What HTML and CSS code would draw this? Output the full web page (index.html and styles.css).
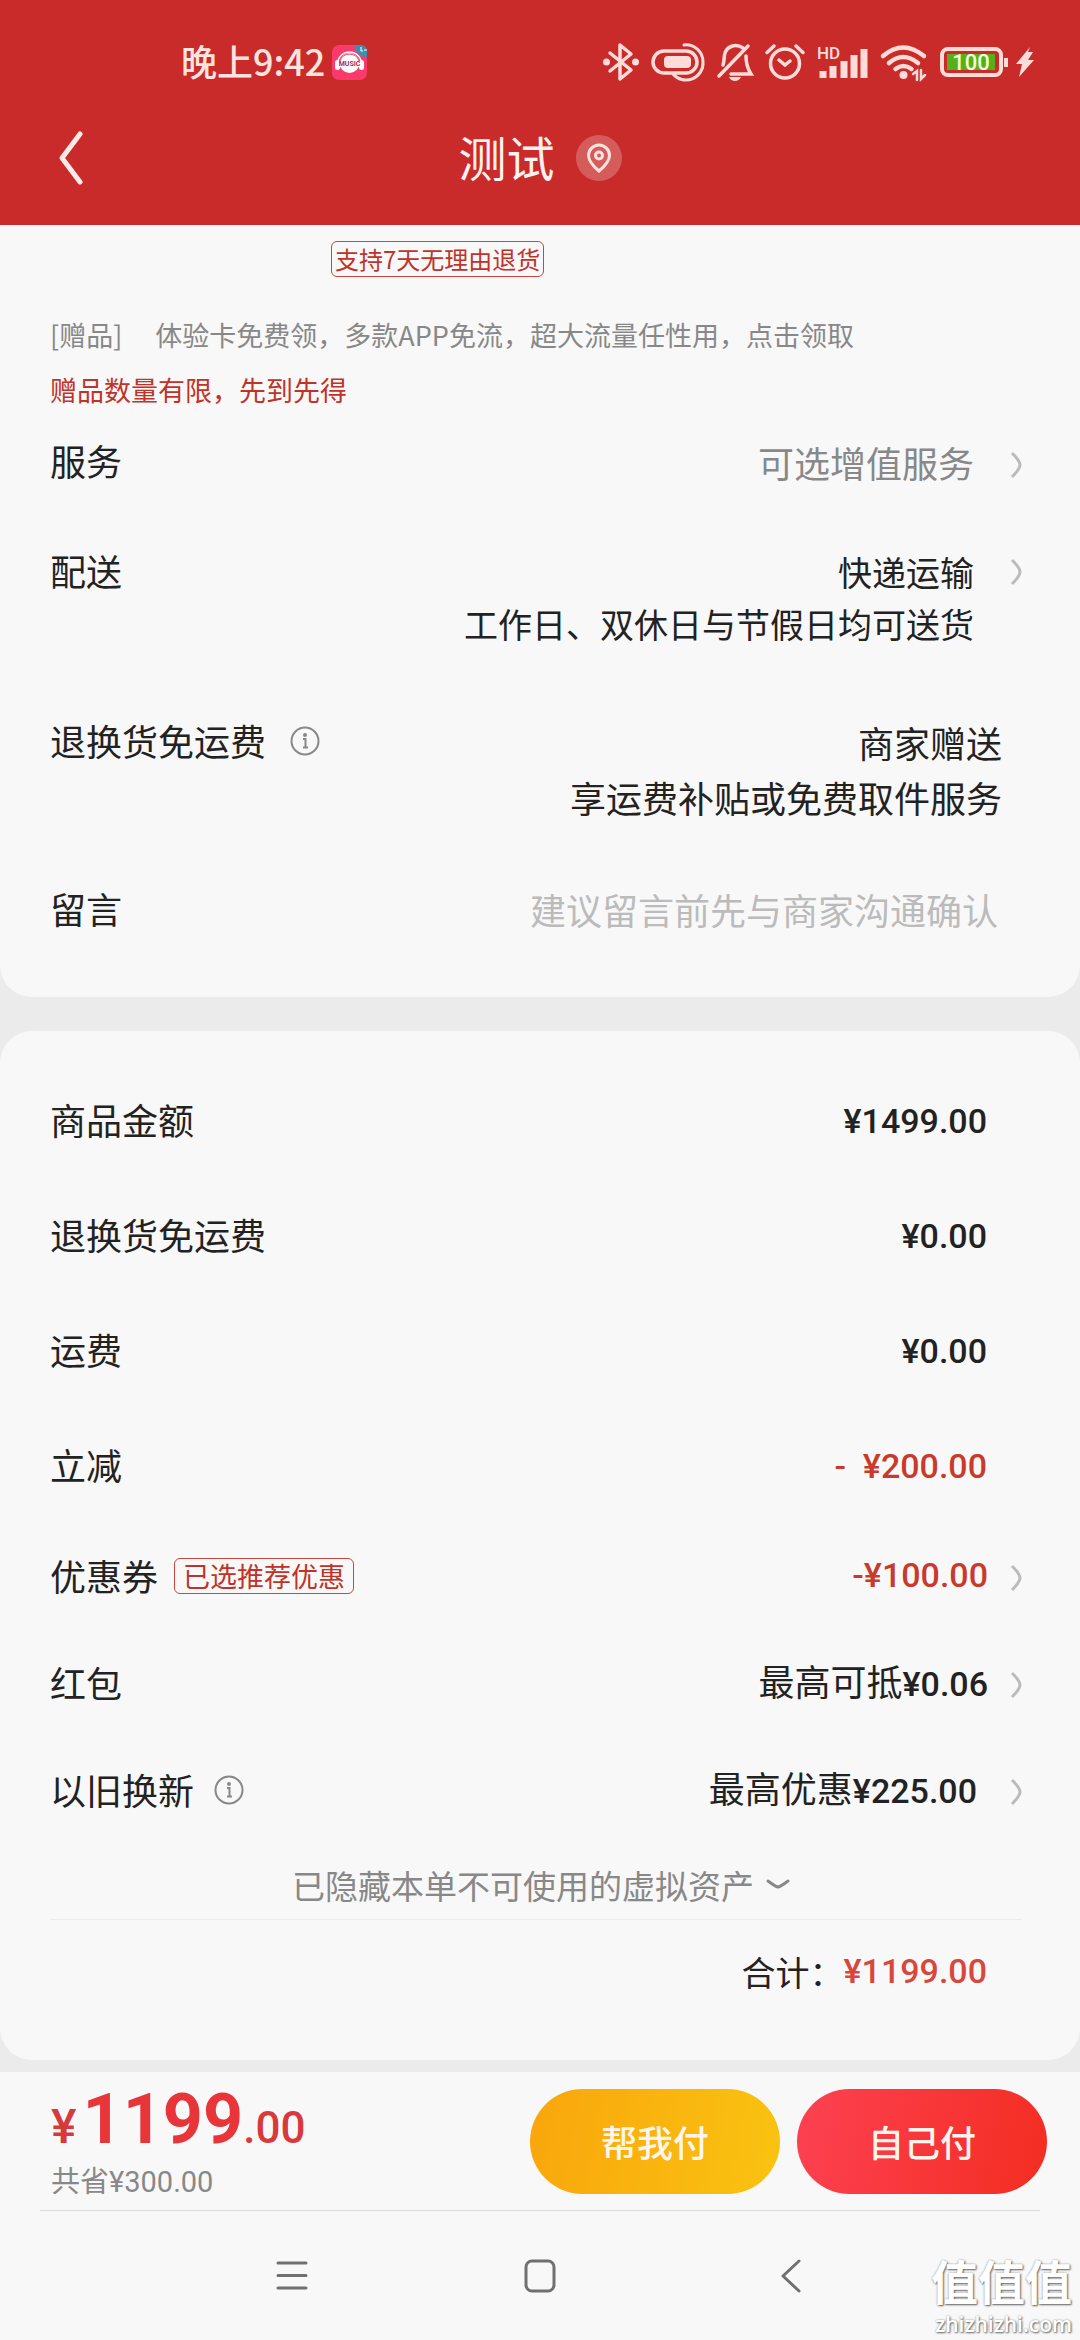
FILE: index.html
```html
<!DOCTYPE html>
<html lang="zh-CN">
<head>
<meta charset="utf-8">
<meta name="viewport" content="width=device-width, initial-scale=1">
<title>测试</title>
<link rel="stylesheet" href="styles.css">
</head>
<body>
<svg class="defs" aria-hidden="true">
  <symbol id="chevron" viewBox="0 0 12 28"><path d="M2 2q8 8 8 12t-8 12" /></symbol>
  <symbol id="info" viewBox="0 0 30 30"><circle cx="15" cy="15" r="13.5"/><path d="M13 13h2.500v8M13 21.500h5"/><circle class="dot" cx="15" cy="9" r="1"/></symbol>
</svg>

<header class="header">
  <div class="status">
    <div class="status-left">
      <span class="clock">晚上9:42</span>
      <svg class="app-icon" width="36" height="36" viewBox="0 0 36 36">
        <rect width="35" height="35" y="1" rx="7" fill="#fb3a6b"/>
        <path d="M22 1h6q7 0 7 7v5q-11 0-13-12z" fill="#3c8fb0"/>
        <path d="M29 3v4h2M32 6h3" fill="none" stroke="#fff" stroke-width="1"/>
        <circle cx="17.500" cy="19" r="10" fill="#fff"/>
        <path d="M5.500 20a12 12 0 0 1 24 0" fill="none" stroke="#fff" stroke-width="1.500"/>
        <path d="M8 17a10 10 0 0 1 19 0" fill="none" stroke="#fb3a6b" stroke-width="1"/>
        <rect x="3" y="16" width="5" height="10" rx="2.500" fill="#fff"/>
        <rect x="27" y="16" width="5" height="10" rx="2.500" fill="#fff"/>
        <text x="17.500" y="22" text-anchor="middle" class="app-text">MUSIC</text>
      </svg>
    </div>
    <div class="status-right">
      <svg width="36" height="38" viewBox="0 0 36 38"><path class="line" stroke-width="3.500" stroke-linejoin="round" d="M7 10l21 17-11 9V2l11 9L7 28"/><circle class="solid" cx="3.500" cy="19" r="3.500"/><circle class="solid" cx="32.500" cy="19" r="3.500"/></svg>
      <svg width="54" height="38" viewBox="0 0 54 38"><rect class="line" stroke-width="3.500" x="2" y="8" width="44" height="22" rx="11"/><rect class="solid" x="13" y="13" width="27" height="12" rx="4"/><path class="line" stroke-width="3" d="M33 2A17 17 0 0 1 52 19 17 17 0 0 1 22 31"/></svg>
      <svg width="36" height="38" viewBox="0 0 36 38"><path class="line" stroke-width="3.500" d="M2 33L31 3M6 22c1-3 1-6 1.500-10C9 3 19 0 26 5M29 13c0 8 1 12 5 18H14"/><path class="solid" d="M12 34h12q-2 4-6 4t-6-4z"/></svg>
      <svg width="40" height="38" viewBox="0 0 40 38"><circle class="line" stroke-width="3.500" cx="20" cy="20.500" r="14.500"/><path class="line" stroke-width="3.500" d="M2 9.500L9 3M38 9.500L31 3M14 17l6 5 5-4"/></svg>
      <svg width="51" height="38" viewBox="0 0 51 38"><text x="0" y="16" class="hd">HD</text><path class="bar" d="M6 35v-7M16 35V23M27 35V18M37 35V12M47 35V6"/></svg>
      <svg width="48" height="38" viewBox="0 0 48 38"><path class="line" stroke-width="4.500" d="M3 13q20-17 41 0M9 20q14-12 29 0M15.500 26q8-6 16 0"/><circle class="solid" cx="23.500" cy="32" r="4"/><path class="line" stroke-width="2.500" d="M33 31l4-3v9M45 32l-4 4v-9"/></svg>
      <svg width="68" height="38" viewBox="0 0 68 38"><rect class="line" stroke-width="4" x="2" y="6" width="59" height="26" rx="6"/><rect x="7" y="11" width="48" height="16" fill="#55b01c"/><path class="bar thin" d="M66 15v9"/><text x="31" y="27" text-anchor="middle" class="battery">100</text></svg>
      <svg class="bolt" width="18" height="38" viewBox="0 0 18 38"><path class="solid" d="M14 4L0 21h6L3 34 18 17h-6l5-8h-5z"/></svg>
    </div>
  </div>
  <div class="titlebar">
    <button class="back" aria-label="返回"><svg width="26" height="54" viewBox="0 0 26 54"><path d="M22 3L4 27l18 24"/></svg></button>
    <div class="title-group">
      <h1 class="title">测试</h1>
      <button class="place" aria-label="地址"><svg width="26" height="30" viewBox="0 0 26 30"><path d="M13 28C7 23 2.500 18 2.500 12.500a10.500 10.500 0 0 1 21 0C23.500 18 19 23 13 28z"/><circle cx="13" cy="12.500" r="3.500"/></svg></button>
    </div>
  </div>
</header>

<main class="content">
  <section class="card order">
    <span class="tag tag-return">支持7天无理由退货</span>
    <p class="gift">[赠品]&emsp; 体验卡免费领，多款APP免流，超大流量任性用，点击领取</p>
    <p class="gift gift-note">赠品数量有限，先到先得</p>
    <div class="row service">
      <span class="label">服务</span>
      <button class="value wide muted"><span>可选增值服务</span><svg class="chevron"><use href="#chevron"/></svg></button>
    </div>
    <div class="row delivery">
      <span class="label">配送</span>
      <button class="value wide medium"><span>快递运输<br>工作日、双休日与节假日均可送货</span><svg class="chevron"><use href="#chevron"/></svg></button>
    </div>
    <div class="row returns">
      <span class="label">退换货免运费 <svg class="info info-far"><use href="#info"/></svg></span>
      <span class="value plain">商家赠送<br>享运费补贴或免费取件服务</span>
    </div>
    <div class="row message">
      <label class="label" for="message">留言</label>
      <input class="note" id="message" type="text" placeholder="建议留言前先与商家沟通确认">
    </div>
  </section>

  <section class="card bill">
    <div class="row tall"><span class="label">商品金额</span><span class="value fixed price">¥1499.00</span></div>
    <div class="row tall"><span class="label">退换货免运费</span><span class="value fixed price">¥0.00</span></div>
    <div class="row tall"><span class="label">运费</span><span class="value fixed price">¥0.00</span></div>
    <div class="row tall"><span class="label">立减</span><span class="value fixed price red">-&nbsp; ¥200.00</span></div>
    <div class="row"><span class="label">优惠券 <span class="tag tag-coupon">已选推荐优惠</span></span><button class="value"><span class="price red">-¥100.00</span><svg class="chevron"><use href="#chevron"/></svg></button></div>
    <div class="row"><span class="label">红包</span><button class="value"><span>最高可抵<b class="price">¥0.06</b></span><svg class="chevron"><use href="#chevron"/></svg></button></div>
    <div class="row"><span class="label">以旧换新 <svg class="info"><use href="#info"/></svg></span><button class="value trade"><span>最高优惠<b class="price">¥225.00</b></span><svg class="chevron"><use href="#chevron"/></svg></button></div>
    <button class="hidden-assets">已隐藏本单不可使用的虚拟资产<svg width="24" height="12" viewBox="0 0 24 12"><path d="M2 2q8 6 10 6t10-6"/></svg></button>
    <div class="sum">合计：<span class="price">¥1199.00</span></div>
  </section>
</main>

<footer class="footer">
  <div class="pay">
    <div class="amount">
      <div class="grand"><span class="currency">¥</span><strong>1199</strong><span>.00</span></div>
      <div class="saved">共省¥300.00</div>
    </div>
    <div class="actions">
      <button class="pay-button friend">帮我付</button>
      <button class="pay-button self">自己付</button>
    </div>
  </div>
  <nav class="nav">
    <button aria-label="菜单"><svg width="36" height="36" viewBox="0 0 36 36"><path d="M4 5h28M4 17.500h28M4 30h28"/></svg></button>
    <button aria-label="主页"><svg width="36" height="36" viewBox="0 0 36 36"><rect x="4" y="3" width="28" height="30" rx="6"/></svg></button>
    <button aria-label="后退"><svg width="36" height="36" viewBox="0 0 36 36"><path d="M29 3L13 18l16 15"/></svg></button>
  </nav>
  <div class="watermark"><span class="mark">值值值</span><span class="domain">zhizhizhi.com</span></div>
</footer>
</body>
</html>
```
FILE: styles.css
```css
* { box-sizing: border-box; }

body {
  margin: 0;
  background: #ebebeb;
  color: #222;
  font-family: "Noto Sans CJK SC", sans-serif;
  font-size: 36px;
}

h1, p { margin: 0; font-weight: 400; }

button, input {
  margin: 0;
  padding: 0;
  border: 0;
  background: none;
  color: inherit;
  font: inherit;
}

svg { display: block; flex: none; overflow: visible; }
.defs { position: absolute; width: 0; height: 0; }

/* header */
.header { background: #c92b2b; color: #fff1ef; }

.status {
  display: flex;
  justify-content: space-between;
  align-items: center;
  height: 90px;
  padding: 34px 46px 0 181px;
}
.status-left { display: flex; align-items: center; gap: 7px; }
.status-right { display: flex; align-items: center; gap: 12px; }
.clock { padding-bottom: 3px; font-size: 36px; font-weight: 500; line-height: 53px; color: #ffe3df; }
.app-text { font: 700 7px Roboto, sans-serif; fill: #a32b5c; }
.line { fill: none; stroke: #ffdcd8; stroke-linecap: round; }
.solid { fill: #ffdcd8; }
.bar { fill: none; stroke: #ffdcd8; stroke-width: 7; }
.thin { stroke-width: 4; }
.bolt { margin-left: -4px; }
.hd { font: 500 17px Roboto, sans-serif; fill: #ffdcd8; }
.battery { font: 500 22px Roboto, sans-serif; fill: #f2ffd8; }

.titlebar {
  display: grid;
  grid-template-columns: 1fr auto 1fr;
  align-items: center;
  height: 135px;
  padding: 0 58px;
}
.title-group { display: flex; align-items: center; gap: 21px; }
.back { justify-self: start; }
.back path { fill: none; stroke: #ffeae7; stroke-width: 5; stroke-linecap: round; stroke-linejoin: round; }
.title { padding-bottom: 3px; font-size: 48px; line-height: 69px; }
.place {
  display: flex;
  align-items: center;
  justify-content: center;
  width: 46px;
  height: 46px;
  border-radius: 50%;
  background: #d65c5c;
}
.place svg { fill: none; stroke: #ffe3df; stroke-width: 3; }

/* cards */
.content { display: grid; gap: 34px; padding-bottom: 12px; }
.card { background: #f8f8f8; padding: 0 58px 0 50px; }
.order { padding-top: 16px; padding-bottom: 59px; border-radius: 0 0 32px 32px; }
.bill { padding-top: 33px; padding-bottom: 38px; border-radius: 32px; }

.tag {
  display: block;
  width: max-content;
  border: 1px solid #c9453d;
  border-radius: 6px;
  color: #bf3328;
}
.tag-return { margin-left: 281px; padding: 0 3px; font-size: 24px; line-height: 34px; }
.tag-coupon { margin-left: 8px; padding: 0 8px; font-size: 27px; line-height: 34px; }

.gift { font-size: 27px; line-height: 55px; color: #888; }
.tag + .gift { margin-top: 30px; }
.gift-note { color: #bf3328; }

.row { display: flex; justify-content: space-between; line-height: 55px; }
.label { display: flex; align-items: center; height: 55px; padding-bottom: 4px; white-space: pre; }
.info { width: 30px; height: 30px; margin-left: 12px; fill: none; stroke: #888; stroke-width: 2; }
.info .dot { fill: #888; }
.info-far { margin-left: 16px; }
.value { display: flex; align-items: center; gap: 22px; text-align: right; }
.value span { padding-bottom: 4px; }
.value.wide { gap: 36px; }
.value.trade { gap: 33px; }
.value.plain { margin-right: 20px; }
.value.fixed { margin-right: 35px; }
.chevron { width: 12px; height: 28px; fill: none; stroke: #bbb; stroke-width: 3; }
.muted { color: #888; }
.medium { font-size: 34px; }
.price { font-family: Roboto, sans-serif; font-size: 34px; font-weight: 500; }
.red { color: #c83a2c; }

.service { padding: 18px 0 14px; }
.delivery { padding-top: 38px; line-height: 52px; }
.delivery .label { height: 52px; }
.delivery .value { align-items: flex-start; }
.delivery .chevron { margin-top: 12px; }
.returns { padding-top: 61px; }
.message { padding-top: 58px; }
.note { flex: 1; min-width: 0; padding: 0 24px 2px 0; height: 55px; text-align: right; }
.note::placeholder { color: #bbb; opacity: 1; }

.bill .row { align-items: center; height: 107px; }
.bill .tall { height: 115px; }

.hidden-assets {
  display: flex;
  align-items: center;
  justify-content: center;
  gap: 12px;
  width: 100%;
  height: 75px;
  padding: 5px 0 0 10px;
  border-bottom: 1px solid #ececec;
  font-size: 33px;
  color: #888;
}
.hidden-assets path { fill: none; stroke: #888; stroke-width: 3; stroke-linecap: round; }

.sum {
  display: flex;
  align-items: center;
  justify-content: flex-end;
  height: 102px;
  padding-right: 35px;
  font-size: 34px;
}
.sum .price { color: #d8463c; }

/* footer */
.footer { position: relative; background: #f8f8f8; }
.pay {
  display: flex;
  align-items: center;
  justify-content: space-between;
  height: 139px;
  margin: 0 40px;
  border-bottom: 1px solid #dcdcdc;
}
.amount { padding-left: 11px; }
.grand { font: 500 44px/72px Roboto, sans-serif; color: #d8393c; }
.grand strong { font-size: 70px; font-weight: 700; color: #e8353a; }
.currency { margin-right: 6px; font-size: 48px; }
.saved { font-family: Roboto, "Noto Sans CJK SC", sans-serif; font-size: 29px; line-height: 36px; color: #888; }
.actions { display: flex; gap: 17px; margin-right: -7px; }
.pay-button {
  width: 250px;
  height: 105px;
  border-radius: 53px;
  color: #fff5ee;
  font-weight: 500;
}
.friend { background: linear-gradient(100deg, #f9a60c, #f9c311); }
.self { background: linear-gradient(100deg, #fd4152, #f32d21); }

.nav {
  display: grid;
  grid-template-columns: repeat(3, 1fr);
  align-items: center;
  height: 129px;
  padding: 0 15.5%;
}
.nav button { display: flex; justify-content: center; }
.nav svg { fill: none; stroke: #707070; stroke-width: 3; stroke-linecap: round; stroke-linejoin: round; }

.watermark {
  position: absolute;
  right: 8px;
  bottom: 2px;
  display: grid;
  justify-items: end;
  color: #fff;
  text-shadow: 1px 1px 2px #666, 0 0 2px #999;
}
.mark { font-size: 47px; font-weight: 700; line-height: 60px; }
.domain { font: 600 21px/28px "Open Sans", sans-serif; }
```
